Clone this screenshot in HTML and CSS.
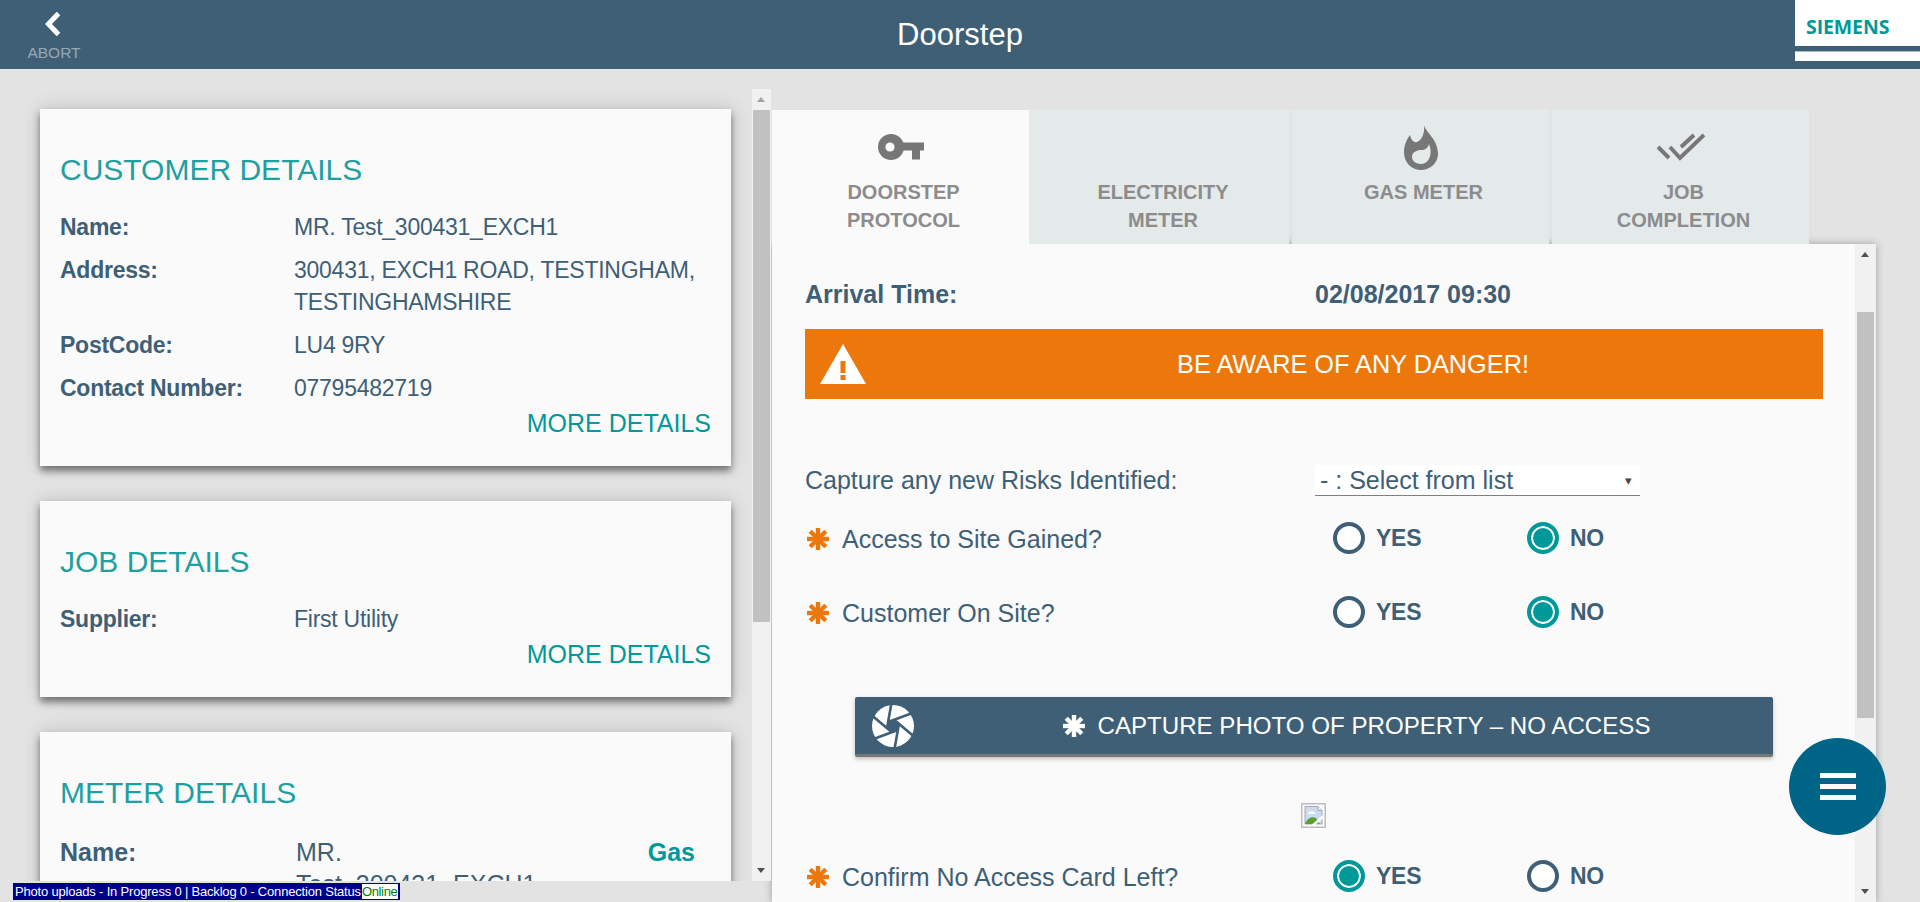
FILE: index.html
```html
<!DOCTYPE html>
<html lang="en">
<head>
<meta charset="utf-8">
<title>Doorstep</title>
<link rel="stylesheet" href="styles.css">
</head>
<body>
<svg class="defs" width="0" height="0" aria-hidden="true">
  <defs>
    <g id="star">
      <g stroke-width="4.4" stroke-linecap="butt">
        <line x1="11" y1="0" x2="11" y2="22"/>
        <line x1="0" y1="11" x2="22" y2="11"/>
        <line x1="3.2" y1="3.2" x2="18.8" y2="18.8"/>
        <line x1="18.8" y1="3.2" x2="3.2" y2="18.8"/>
      </g>
    </g>
  </defs>
</svg>
<header class="topbar">
  <a class="abort">
    <svg class="abort-icon" width="18" height="26" viewBox="0 0 18 26"><path d="M14.5 2.5 L4.5 13 L14.5 23.5" fill="none" stroke="#fff" stroke-width="5"/></svg>
    <span class="abort-label">ABORT</span>
  </a>
  <h1 class="title">Doorstep</h1>
  <div class="logo">
    <div class="logo-top"><span class="logo-text">SIEMENS</span></div>
    <div class="logo-stripe"></div>
  </div>
</header>

<main class="workspace">
  <section class="left-pane">
    <div class="left-scroll">
      <article class="card">
        <h2 class="card-title">CUSTOMER DETAILS</h2>
        <div class="info-row"><span class="info-label">Name:</span><span class="info-value">MR. Test_300431_EXCH1</span></div>
        <div class="info-row"><span class="info-label">Address:</span><span class="info-value">300431, EXCH1 ROAD, TESTINGHAM, TESTINGHAMSHIRE</span></div>
        <div class="info-row"><span class="info-label">PostCode:</span><span class="info-value">LU4 9RY</span></div>
        <div class="info-row"><span class="info-label">Contact Number:</span><span class="info-value">07795482719</span></div>
        <a class="more">MORE DETAILS</a>
      </article>
      <article class="card">
        <h2 class="card-title">JOB DETAILS</h2>
        <div class="info-row"><span class="info-label">Supplier:</span><span class="info-value">First Utility</span></div>
        <a class="more">MORE DETAILS</a>
      </article>
      <article class="card">
        <h2 class="card-title">METER DETAILS</h2>
        <div class="info-row meter-row"><span class="info-label">Name:</span><span class="info-value meter-name">MR. Test_300431_EXCH1</span><span class="meter-type">Gas</span></div>
      </article>
    </div>
    <div class="scrollbar scrollbar-left">
      <span class="arrow-up"></span>
      <span class="thumb thumb-left"></span>
      <span class="arrow-down"></span>
    </div>
  </section>

  <section class="right-pane">
    <nav class="tabs">
      <div class="tab tab-active tab-first">
        <div class="tab-icon">
          <svg width="46" height="26" viewBox="0 0 46 26"><circle cx="13" cy="13" r="13" fill="#777"/><circle cx="12" cy="13" r="4.6" fill="#fafafa"/><path d="M22 8.500H46V16.500H42V25.500H34V16.500H22Z" fill="#777"/></svg>
        </div>
        <div class="tab-text">DOORSTEP<br>PROTOCOL</div>
      </div>
      <div class="tab tab-wide">
        <div class="tab-icon"></div>
        <div class="tab-text">ELECTRICITY<br>METER</div>
      </div>
      <div class="tab">
        <div class="tab-icon">
          <svg width="34" height="45" viewBox="0 0 34 45"><path d="M20 0C22 8 34 14 34 29C34 38 26 45 17 45C8 45 0 38 0 27C0 20 3 14 6 10C7 15 10 18 13 17C18 15 21 8 20 0Z" fill="#777"/><path d="M25 19C27 24 27 28 26 31C25 36 21 39 17 39C12 39 8 36 8 32C8 27 13 25 17 25C21 25 24 23 25 19Z" fill="#e4e9ea"/></svg>
        </div>
        <div class="tab-text">GAS METER</div>
      </div>
      <div class="tab">
        <div class="tab-icon">
          <svg width="48" height="28" viewBox="0 0 48 28"><path d="M1 14L12 25M13 14L23 25L47 2M24 14L37 2" fill="none" stroke="#777" stroke-width="4"/></svg>
        </div>
        <div class="tab-text">JOB<br>COMPLETION</div>
      </div>
    </nav>

    <div class="panel">
      <div class="panel-body">
        <div class="form-row arrival"><span class="arrival-label">Arrival Time:</span><span class="arrival-value">02/08/2017 09:30</span></div>
        <div class="banner">
          <svg class="banner-icon" width="46" height="40" viewBox="0 0 46 40"><path d="M23 0L46 40H0Z" fill="#fff"/><rect x="20.500" y="17" width="5" height="12" fill="#ec770a"/><rect x="20.500" y="31" width="5" height="5" fill="#ec770a"/></svg>
          <span class="banner-text">BE AWARE OF ANY DANGER!</span>
        </div>
        <div class="form-row risk-row">
          <span class="q-label q-plain">Capture any new Risks Identified:</span>
          <div class="select"><span>- : Select from list</span><span class="select-arrow">▾</span></div>
        </div>
        <div class="form-row q-row q-access">
          <span class="q-label"><svg class="star" width="22" height="22" viewBox="0 0 22 22"><use href="#star" stroke="#ec770a"/></svg>Access to Site Gained?</span>
          <span class="opt"><span class="radio"></span>YES</span>
          <span class="opt"><span class="radio radio-on"></span>NO</span>
        </div>
        <div class="form-row q-row q-customer">
          <span class="q-label"><svg class="star" width="22" height="22" viewBox="0 0 22 22"><use href="#star" stroke="#ec770a"/></svg>Customer On Site?</span>
          <span class="opt"><span class="radio"></span>YES</span>
          <span class="opt"><span class="radio radio-on"></span>NO</span>
        </div>
        <a class="capture">
          <svg class="capture-icon" width="42" height="42" viewBox="-21 -21 42 42">
            <circle r="21" fill="#fff"/>
            <polygon points="6.300,0 3.150,5.460 -3.150,5.460 -6.300,0 -3.150,-5.460 3.150,-5.460" fill="#3e5f76" transform="rotate(10)"/>
            <g stroke="#3e5f76" stroke-width="2.600">
              <line x1="-5.500" y1="3.200" x2="-5.500" y2="-22" transform="rotate(10)"/>
              <line x1="-5.500" y1="3.200" x2="-5.500" y2="-22" transform="rotate(70)"/>
              <line x1="-5.500" y1="3.200" x2="-5.500" y2="-22" transform="rotate(130)"/>
              <line x1="-5.500" y1="3.200" x2="-5.500" y2="-22" transform="rotate(190)"/>
              <line x1="-5.500" y1="3.200" x2="-5.500" y2="-22" transform="rotate(250)"/>
              <line x1="-5.500" y1="3.200" x2="-5.500" y2="-22" transform="rotate(310)"/>
            </g>
          </svg>
          <span class="capture-text"><svg class="star-white" width="22" height="22" viewBox="0 0 22 22"><use href="#star" stroke="#fff"/></svg>CAPTURE PHOTO OF PROPERTY – NO ACCESS</span>
        </a>
        <div class="broken">
          <svg width="25" height="25" viewBox="0 0 25 25"><rect x=".75" y=".75" width="23.500" height="23.500" fill="#fafafa" stroke="#bdbdbd" stroke-width="1.500"/><path d="M4 3.500H17L21 7.500V21H4Z" fill="#c9dcf5" stroke="#a9a9a9"/><path d="M17 3.500V7.500H21" fill="#f4f4f4" stroke="#a9a9a9"/><path d="M7 10C9 7 14 8 15 11H7Z" fill="#fff"/><path d="M4 21C6 15 11 13 15 15L19 21Z" fill="#5aa02c"/><path d="M12 22.500L22 13.500" stroke="#fafafa" stroke-width="3"/></svg>
        </div>
        <div class="form-row q-row q-card">
          <span class="q-label"><svg class="star" width="22" height="22" viewBox="0 0 22 22"><use href="#star" stroke="#ec770a"/></svg>Confirm No Access Card Left?</span>
          <span class="opt"><span class="radio radio-on"></span>YES</span>
          <span class="opt"><span class="radio"></span>NO</span>
        </div>
      </div>
      <div class="scrollbar scrollbar-right">
        <span class="arrow-up"></span>
        <span class="thumb thumb-right"></span>
        <span class="arrow-down"></span>
      </div>
    </div>
  </section>
</main>

<a class="fab"><span class="fab-bar"></span><span class="fab-bar"></span><span class="fab-bar"></span></a>

<div class="status"><span class="status-text">Photo uploads - In Progress 0 | Backlog 0 - Connection Status</span><span class="status-online">Online</span></div>
</body>
</html>
```
FILE: styles.css
```css
* { box-sizing: border-box; }
html, body { margin: 0; height: 902px; overflow: hidden; }
body { background: #e3e3e3; font-family: "Liberation Sans", Arial, sans-serif; color: #3e5f76; position: relative; }
.defs { position: absolute; }

/* top bar */
.topbar { height: 69px; background: #3e5f76; position: relative; display: flex; justify-content: center; align-items: center; }
.abort { position: absolute; left: 27px; top: 0; width: 54px; display: flex; flex-direction: column; align-items: center; }
.abort-icon { margin-top: 11px; margin-left: -2px; }
.abort-label { font-size: 15.500px; line-height: 18px; margin-top: 7px; color: #97a8b4; white-space: nowrap; }
.title { margin: 0; font-size: 31px; font-weight: 400; line-height: 66px; color: #fff; }
.logo { position: absolute; right: 0; top: 0; width: 125px; }
.logo-top { height: 46px; background: #fff; padding: 16px 0 0 11px; }
.logo-text { font-family: "Open Sans", sans-serif; font-weight: 700; font-size: 19.500px; line-height: 22px; color: #009999; display: block; letter-spacing: -.1px; }
.logo-stripe { margin-top: 5px; height: 10px; background: #fff; border-top: 1px solid #a9bcc9; }

/* layout */
.workspace { display: flex; padding-top: 20px; }
.left-pane { width: 771px; height: 792px; display: flex; }
.left-scroll { width: 752px; height: 792px; overflow: hidden; padding: 20px 21px 0 40px; flex: none; }
.right-pane { margin-left: 1px; width: 1104px; padding-top: 21px; }

/* scrollbars */
.scrollbar { width: 19px; background: #f1f1f1; position: relative; flex: none; }
.thumb { position: absolute; left: 1px; width: 17px; background: #c1c1c1; }
.thumb-left { top: 21px; height: 512px; }
.thumb-right { top: 68px; height: 406px; }
.arrow-up, .arrow-down { position: absolute; left: 5px; width: 0; height: 0; border-left: 4.500px solid transparent; border-right: 4.500px solid transparent; }
.arrow-up { top: 8px; border-bottom: 5px solid #a3a3a3; }
.arrow-down { bottom: 8px; border-top: 5px solid #505050; }
.scrollbar-right .arrow-up { border-bottom-color: #505050; }

/* cards */
.card { background: #fafafa; padding: 40px 20px 27px; margin-bottom: 35px; box-shadow: 0 5px 7px rgba(0,0,0,.45), 0 0 18px rgba(0,0,0,.16); }
.card-title { margin: 0 0 20px; font-size: 30px; line-height: 42px; font-weight: 400; color: #1fa0a0; white-space: nowrap; }
.info-row { display: flex; font-size: 23px; letter-spacing: -.25px; line-height: 32px; margin-bottom: 11px; }
.info-row:last-of-type { margin-bottom: 3px; }
.info-label { font-weight: 700; width: 234px; flex: none; }
.more { display: block; text-align: right; font-size: 25px; line-height: 32px; color: #009999; }
.meter-row { margin-top: 22px; font-size: 25px; letter-spacing: 0; }
.meter-name { width: 250px; flex: none; margin-left: 2px; }
.meter-type { font-weight: 700; color: #009999; margin-left: auto; margin-right: 16px; }

/* tabs */
.tabs { display: flex; height: 134px; }
.tab { width: 257px; margin-right: 3px; background: #e4e9ea; padding-top: 6px; color: #8c8c8c; font-weight: 700; font-size: 20px; line-height: 28px; text-align: center; }
.tab-active { background: #fafafa; }
.tab-first { margin-right: 0; }
.tab-wide { width: 260px; }
.tab-icon { height: 62px; display: flex; align-items: center; justify-content: center; }
.tab-text { padding-left: 6px; }
.tab-wide .tab-text { padding-left: 8px; }

/* panel */
.panel { display: flex; height: 658px; background: #fafafa; box-shadow: 0 0 8px rgba(0,0,0,.3); }
.panel-body { width: 1083px; padding: 34px 32px 0 33px; flex: none; }
.scrollbar-right { width: 21px; }
.scrollbar-right .thumb { left: 2px; }
.scrollbar-right .arrow-up, .scrollbar-right .arrow-down { left: 6px; }
.form-row { display: flex; align-items: center; height: 32px; }
.arrival { font-weight: 700; font-size: 25px; }
.arrival-label { width: 510px; flex: none; }
.banner { margin-top: 19px; height: 70px; background: #ec770a; display: flex; align-items: center; padding-left: 15px; color: #fff; font-size: 25.300px; }
.banner-icon { margin-right: 17px; flex: none; }
.banner-text { flex: 1; text-align: center; }
.risk-row { margin-top: 65px; }
.q-label { font-size: 25px; width: 510px; flex: none; display: flex; align-items: center; line-height: 32px; padding-top: 2px; white-space: nowrap; }
.q-plain { padding-top: 0; }
.select { width: 325px; height: 31px; background: #fff; border-bottom: 1px solid #808080; display: flex; justify-content: space-between; align-items: center; padding: 2px 8px 0 5px; font-size: 25px; }
.select-arrow { font-size: 13px; color: #444; }
.q-access { margin-top: 26px; }
.q-customer { margin-top: 42px; }
.q-card { margin-top: 32px; }
.star { margin: 0 13px 0 2px; flex: none; }
.opt { width: 194px; padding-left: 18px; display: flex; align-items: center; font-weight: 700; font-size: 23px; letter-spacing: -.25px; flex: none; }
.radio { width: 32px; height: 32px; border: 4px solid #3e5f76; border-radius: 50%; margin-right: 11px; background: #fff; flex: none; }
.radio-on { border-color: #009999; background: #009999; box-shadow: inset 0 0 0 2px #fff; }
.capture { margin: 69px 50px 0; height: 60px; background: #3e5f76; border-bottom: 3px solid #777; border-radius: 2px; box-shadow: 0 2px 4px rgba(0,0,0,.25); display: flex; align-items: center; padding-left: 17px; color: #fff; font-size: 24.100px; }
.capture-icon { flex: none; margin-right: 26px; }
.capture-text { flex: 1; display: flex; justify-content: center; align-items: center; white-space: nowrap; }
.star-white { margin-right: 13px; flex: none; }
.broken { margin: 46px 0 0 496px; height: 25px; }

/* floating */
.fab { position: absolute; left: 1789px; top: 738px; width: 97px; height: 97px; border-radius: 50%; background: #006487; display: flex; flex-direction: column; justify-content: center; align-items: center; gap: 6px; }
.fab-bar { width: 36px; height: 5px; background: #fff; }
.status { position: absolute; left: 13px; top: 883px; height: 17px; width: 387px; padding: 0 2px; background: #00008b; color: #fff; font-size: 13px; line-height: 17px; display: flex; justify-content: space-between; white-space: nowrap; }
.status-text { letter-spacing: -.19px; }
.status-online { background: #fff; color: #008000; width: 36px; margin-top: 1px; height: 15px; line-height: 15px; letter-spacing: -.37px; }
```
